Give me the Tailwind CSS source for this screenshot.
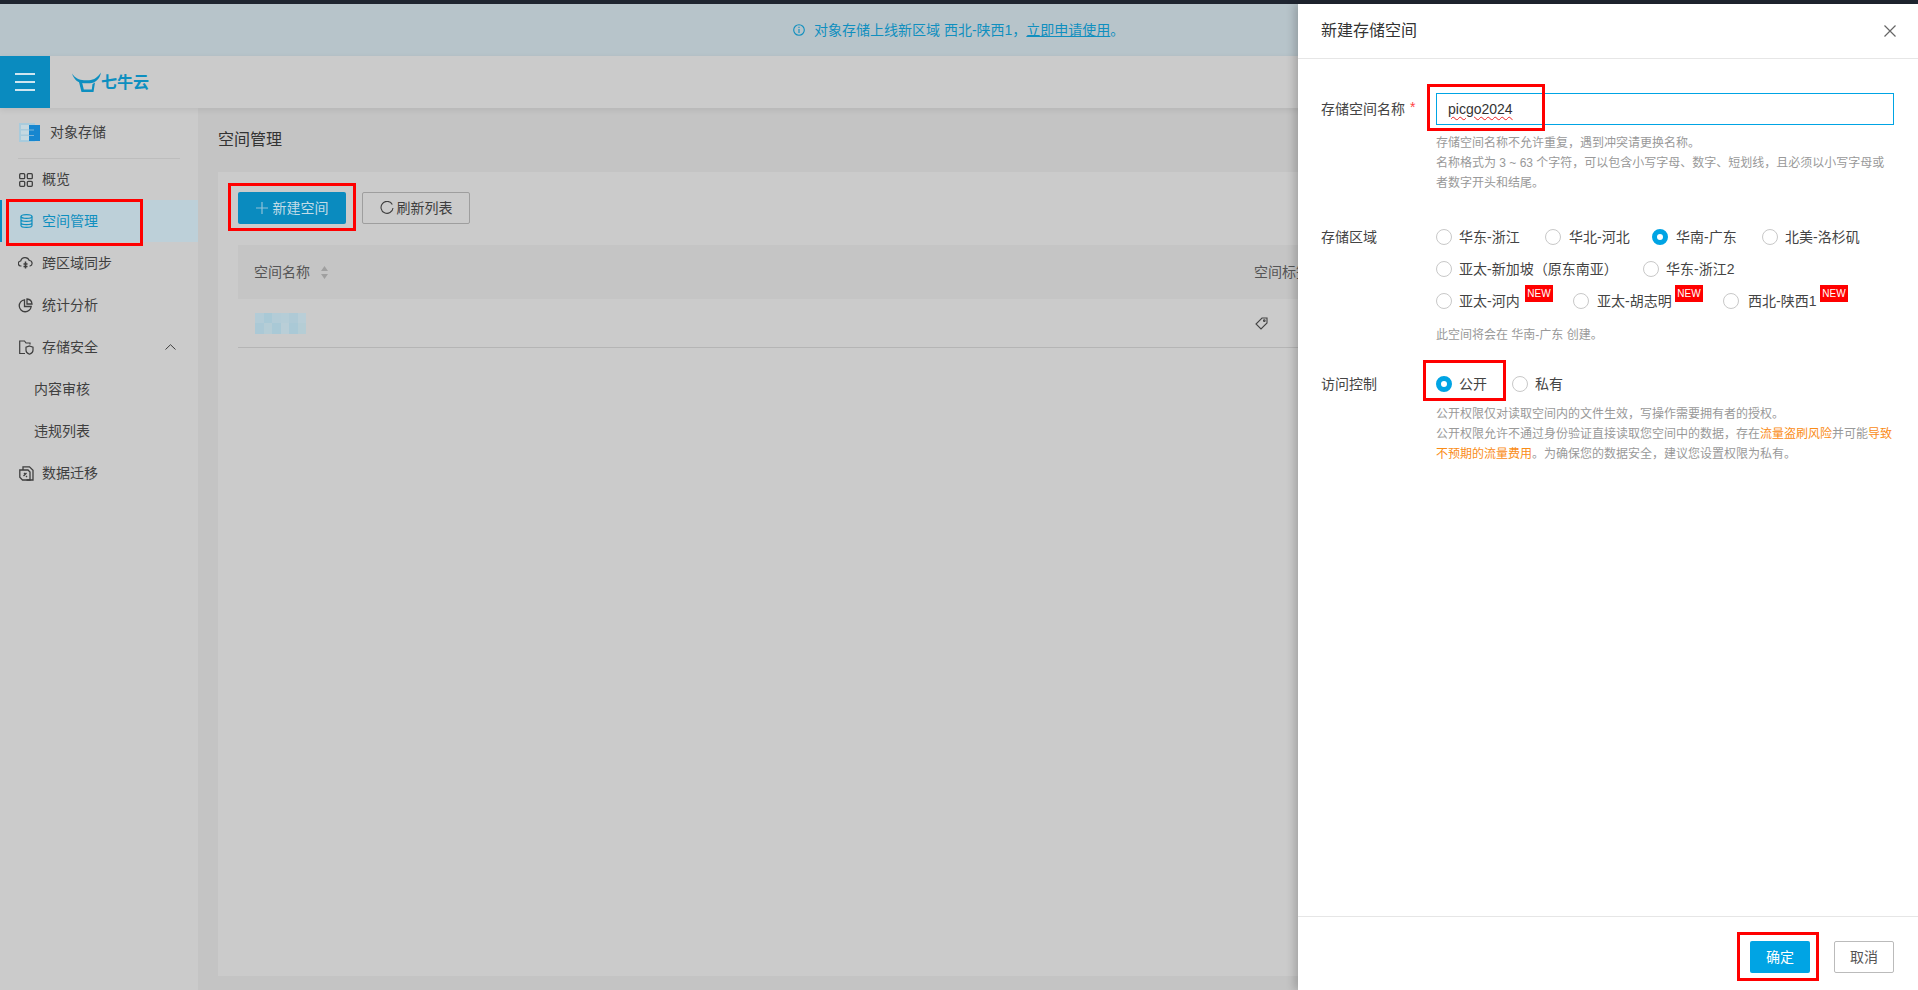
<!doctype html>
<html lang="zh-CN">
<head>
<meta charset="utf-8">
<script src="https://cdn.jsdelivr.net/npm/@tailwindcss/browser@4"></script>
</head>
<body class="m-0 overflow-hidden bg-[#c4c4c4] font-['Liberation_Sans','Noto_Sans_CJK_SC',sans-serif] text-[14px] text-[#3f3f3f]">
<div class="relative flex h-[990px] w-[1918px] flex-col overflow-hidden">
  <div class="h-[4px] shrink-0 bg-[#1f2530]"></div>

  <div class="flex h-[52px] shrink-0 items-center bg-[#b7c4ca] pl-[793px] text-[#0f8fbf]">
    <svg class="mr-[9px] h-[12px] w-[12px]" viewBox="0 0 12 12" fill="none" stroke="currentColor" stroke-width="1.100"><circle cx="6" cy="6" r="5.300"/><path d="M6 5v4M6 2.800v1.100"/></svg>
    <span>对象存储上线新区域 西北-陕西1，<span class="underline">立即申请使用</span>。</span>
  </div>

  <div class="z-10 flex h-[52px] shrink-0 items-center bg-[#cbcbcb] shadow-[0_2px_6px_rgba(0,0,0,0.08)]">
    <div class="flex h-[52px] w-[50px] flex-col items-center justify-center gap-[6px] bg-[#0a8bbf]">
      <span class="h-[2px] w-[20px] bg-[#cfe6f0]"></span>
      <span class="h-[2px] w-[20px] bg-[#cfe6f0]"></span>
      <span class="h-[2px] w-[20px] bg-[#cfe6f0]"></span>
    </div>
    <svg class="ml-[21px] h-[21px] w-[31px]" viewBox="0 0 31 21" fill="#0d8fc0"><path d="M1 1.500C4 6 8 8 13 8.300H18C23 8 27 5 30 .5 29 7 24 11 19 11.300H13C7 11.300 3 7.500 1 1.500Z"/><path d="M8 10h3l1.800 7.500h8L21.500 12l2.500-1.500-1.500 9.500h-12Z"/></svg>
    <span class="mt-[2px] -ml-[1px] text-[16px] leading-none font-bold text-[#0d8fc0]">七牛云</span>
  </div>

  <div class="flex min-h-0 flex-1">
    <aside class="w-[198px] shrink-0 bg-[#cbcbcb] text-[14px]">
      <div class="flex h-[50px] items-center pb-[1px] pl-[19px]">
        <svg class="mr-[10px] h-[21px] w-[21px]" viewBox="0 0 21 21"><rect x="0" y="1" width="16" height="19" fill="#a9cbdc"/><rect x="2" y="3" width="10" height="4" fill="#c6d8e0"/><rect x="2" y="8.500" width="10" height="4" fill="#c6d8e0"/><rect x="2" y="14" width="10" height="4" fill="#c6d8e0"/><rect x="10" y="3" width="11" height="16" fill="#1786cf"/><rect x="10" y="7.500" width="5" height="1" fill="#7db4d8"/><rect x="10" y="13" width="5" height="1" fill="#7db4d8"/></svg>
        <span>对象存储</span>
      </div>
      <div class="mx-[18px] h-px bg-[#bdbdbd]"></div>
      <a class="flex h-[41px] items-center pl-[19px]">
        <svg class="mr-[9px] h-[14px] w-[14px]" viewBox="0 0 14 14" fill="none" stroke="#3f3f3f" stroke-width="1.300"><rect x=".7" y=".7" width="5" height="5" rx="1"/><rect x="8.300" y=".7" width="5" height="5" rx="1"/><rect x=".7" y="8.300" width="5" height="5" rx="1"/><rect x="8.300" y="8.300" width="5" height="5" rx="1"/></svg>
        概览
      </a>
      <a class="flex h-[42px] items-center border-l-[2px] border-[#0a8bbf] bg-[#bdd0d9] pl-[18px] text-[#0f8fbf]">
        <svg class="mr-[9px] h-[14px] w-[13px]" viewBox="0 0 13 14" fill="none" stroke="#0f8fbf" stroke-width="1.200"><ellipse cx="6.500" cy="2.500" rx="5.500" ry="1.900"/><path d="M1 2.500v9c0 1 2.500 1.900 5.500 1.900s5.500-.9 5.500-1.900v-9M1 5.500c0 1 2.500 1.900 5.500 1.900S12 6.500 12 5.500M1 8.700c0 1 2.500 1.900 5.500 1.900S12 9.700 12 8.700"/></svg>
        空间管理
      </a>
      <a class="flex h-[42px] items-center pl-[18px]">
        <svg class="mr-[9px] h-[14px] w-[15px]" viewBox="0 0 15 14" fill="none" stroke="#3f3f3f" stroke-width="1.200"><path d="M3.500 10H3A2.500 2.500 0 0 1 2.700 5 4.500 4.500 0 0 1 11.300 4.500 2.800 2.800 0 0 1 12 10h-.5"/><path d="M7.500 5.500v7M5.500 8h4M5.500 10.500h4" stroke-width="1.500"/></svg>
        跨区域同步
      </a>
      <a class="flex h-[42px] items-center pl-[18px]">
        <svg class="mr-[9px] h-[15px] w-[15px]" viewBox="0 0 15 15" fill="none" stroke="#3f3f3f" stroke-width="1.300"><path d="M6.500 1.800a6 6 0 1 0 6.700 6.700H6.500Z"/><path d="M9 1a5.500 5.500 0 0 1 5 5H9Z"/></svg>
        统计分析
      </a>
      <a class="flex h-[42px] items-center pl-[19px]">
        <svg class="mr-[8px] h-[15px] w-[15px]" viewBox="0 0 15 15" fill="none" stroke="#3f3f3f" stroke-width="1.200"><path d="M6 13.500H.7V1H5.500L7 3h4v1.500"/><path d="M10.500 6l3.500 1.200v3c0 2-1.500 3.300-3.500 4-2-.7-3.500-2-3.500-4v-3Z"/></svg>
        存储安全
        <svg class="mr-[22px] ml-auto h-[6px] w-[11px]" viewBox="0 0 11 6" fill="none" stroke="#3f3f3f" stroke-width="1"><path d="M.5 5.500 5.500.7l5 4.800"/></svg>
      </a>
      <a class="flex h-[42px] items-center pl-[34px]">内容审核</a>
      <a class="flex h-[42px] items-center pl-[34px]">违规列表</a>
      <a class="flex h-[42px] items-center pl-[19px]">
        <svg class="mr-[8px] h-[15px] w-[15px]" viewBox="0 0 15 15" fill="none" stroke="#3f3f3f" stroke-width="1.300"><path d="M4 4V.8h6.500L14 4.300V14H7.500"/><path d="M.8 4H9l2 2v8H3.500L.8 11.300Z"/><path d="m4.500 10 3-3M5 7l1 1M7 10l1 1"/></svg>
        数据迁移
      </a>
    </aside>

    <main class="min-w-0 flex-1 pl-[20px]">
      <h1 class="flex h-[64px] items-center text-[16px] leading-none font-normal text-[#333]">空间管理</h1>
      <section class="h-[804px] w-[1680px] bg-[#cbcbcb] px-[20px] pt-[20px]">
        <div class="flex gap-[16px]">
          <button class="flex h-[32px] w-[108px] items-center justify-center gap-[5px] rounded-[2px] bg-[#0a8bbf] text-[#c2dce7]">
            <svg class="h-[12px] w-[12px]" viewBox="0 0 12 12" stroke="#8fc2d8" stroke-width="1.200"><path d="M6 0v12M0 6h12"/></svg>
            新建空间
          </button>
          <button class="flex h-[32px] w-[108px] items-center justify-center gap-[3px] rounded-[2px] border border-[#9e9e9e] text-[#3f3f3f]">
            <svg class="h-[14px] w-[14px]" viewBox="0 0 14 14" fill="none" stroke="#3f3f3f" stroke-width="1.100"><path d="M12.300 3.500A6 6 0 1 0 13 7"/></svg>
            刷新列表
          </button>
        </div>
        <div class="mt-[21px] flex h-[54px] items-center bg-[#c5c5c5] pl-[16px] text-[#555]">
          <span>空间名称</span>
          <svg class="ml-[10px] h-[13px] w-[9px]" viewBox="0 0 9 13" fill="#a0a0a0"><path d="M4.500 0 8 5H1ZM4.500 13 1 8h7Z"/></svg>
          <span class="ml-[925px] whitespace-nowrap">空间标签</span>
        </div>
        <div class="flex h-[49px] items-center border-b border-[#b5b5b5] pl-[17px]">
          <div class="grid h-[21px] w-[51px] grid-cols-[repeat(6,8.5px)] grid-rows-[repeat(2,10.5px)] bg-[#b3ccd7]">
            <div class="bg-[#b3ccd7]"></div><div class="bg-[#a9c9d6]"></div><div class="bg-[#b3ccd7]"></div><div class="bg-[#b5cdd7]"></div><div class="bg-[#afcad6]"></div><div class="bg-[#b9ced7]"></div>
            <div class="bg-[#abc9d6]"></div><div class="bg-[#b5cdd6]"></div><div class="bg-[#a9c9d6]"></div><div class="bg-[#b9ced7]"></div><div class="bg-[#aac9d6]"></div><div class="bg-[#b5cdd5]"></div>
          </div>
          <svg class="ml-[949px] h-[13px] w-[13px]" viewBox="0 0 13 13" fill="none" stroke="#444" stroke-width="1.100"><path d="M12 1H7L1 7l5 5 6-6Z"/><circle cx="9.300" cy="3.700" r=".8"/></svg>
        </div>
      </section>
    </main>
  </div>

  <!-- drawer -->
  <aside class="absolute top-[4px] right-0 z-20 flex h-[986px] w-[620px] flex-col bg-white shadow-[-4px_0_8px_rgba(0,0,0,0.18)]">
    <header class="flex h-[55px] shrink-0 items-center justify-between border-b border-[#e6e6e6] pr-[22px] pl-[23px]">
      <span class="text-[16px] leading-none text-[#333]">新建存储空间</span>
      <svg class="h-[12px] w-[12px]" viewBox="0 0 12 12" stroke="#666" stroke-width="1.200"><path d="m.5.500 11 11M11.500.500l-11 11"/></svg>
    </header>

    <div class="flex-1 pt-[34px] pr-[24px] pl-[23px] text-[14px] text-[#444]">
      <div class="flex">
        <label class="flex h-[32px] w-[115px] shrink-0 items-center">存储空间名称<span class="ml-[5px] -translate-y-[2px] text-[#f44]">*</span></label>
        <div class="min-w-0 flex-1">
          <div class="flex h-[32px] items-center border border-[#00a4e4] pl-[11px] text-[#333]"><span class="underline decoration-[#e22] decoration-wavy decoration-1 underline-offset-[2px]">picgo2024</span></div>
          <p class="mt-[8px] text-[12px] leading-[20px] text-[#999]">存储空间名称不允许重复，遇到冲突请更换名称。<br>名称格式为 3 ~ 63 个字符，可以包含小写字母、数字、短划线，且必须以小写字母或者数字开头和结尾。</p>
        </div>
      </div>

      <div class="mt-[28px] flex">
        <label class="flex h-[32px] w-[115px] shrink-0 items-center">存储区域</label>
        <div class="min-w-0 flex-1">
          <div class="flex h-[32px] items-center">
            <span class="h-[16px] w-[16px] rounded-full border border-[#c8c8c8]"></span><span class="ml-[7px] w-[86px]">华东-浙江</span>
            <span class="h-[16px] w-[16px] rounded-full border border-[#c8c8c8]"></span><span class="ml-[8px] w-[83px]">华北-河北</span>
            <span class="h-[16px] w-[16px] rounded-full border-[5px] border-[#00a4e4]"></span><span class="ml-[8px] w-[86px]">华南-广东</span>
            <span class="h-[16px] w-[16px] rounded-full border border-[#c8c8c8]"></span><span class="ml-[7px]">北美-洛杉矶</span>
          </div>
          <div class="flex h-[32px] items-center">
            <span class="h-[16px] w-[16px] rounded-full border border-[#c8c8c8]"></span><span class="ml-[7px] w-[184px]">亚太-新加坡（原东南亚）</span>
            <span class="h-[16px] w-[16px] rounded-full border border-[#c8c8c8]"></span><span class="ml-[7px]">华东-浙江2</span>
          </div>
          <div class="flex h-[32px] items-center">
            <span class="h-[16px] w-[16px] rounded-full border border-[#c8c8c8]"></span><span class="ml-[7px] w-[61px] whitespace-nowrap">亚太-河内</span>
            <span class="mb-[15px] ml-[5px] flex h-[17px] w-[28px] items-center justify-center bg-[#f00] text-[10px] leading-none text-white">NEW</span>
            <span class="ml-[20px] h-[16px] w-[16px] rounded-full border border-[#c8c8c8]"></span><span class="ml-[8px] w-[73px] whitespace-nowrap">亚太-胡志明</span>
            <span class="mb-[15px] ml-[5px] flex h-[17px] w-[28px] items-center justify-center bg-[#f00] text-[10px] leading-none text-white">NEW</span>
            <span class="ml-[20px] h-[16px] w-[16px] rounded-full border border-[#c8c8c8]"></span><span class="ml-[9px] w-[67px] whitespace-nowrap">西北-陕西1</span>
            <span class="mb-[15px] ml-[5px] flex h-[17px] w-[28px] items-center justify-center bg-[#f00] text-[10px] leading-none text-white">NEW</span>
          </div>
          <p class="mt-[8px] text-[12px] leading-[20px] text-[#999]">此空间将会在 华南-广东 创建。</p>
        </div>
      </div>

      <div class="mt-[23px] flex">
        <label class="flex h-[32px] w-[115px] shrink-0 items-center">访问控制</label>
        <div class="min-w-0 flex-1">
          <div class="flex h-[32px] items-center">
            <span class="h-[16px] w-[16px] rounded-full border-[5px] border-[#00a4e4]"></span><span class="ml-[7px] w-[53px]">公开</span>
            <span class="h-[16px] w-[16px] rounded-full border border-[#c8c8c8]"></span><span class="ml-[7px]">私有</span>
          </div>
          <div class="mt-[4px] text-[12px] leading-[20px] text-[#999]">
            <p>公开权限仅对读取空间内的文件生效，写操作需要拥有者的授权。</p>
            <p class="whitespace-nowrap">公开权限允许不通过身份验证直接读取您空间中的数据，存在<span class="text-[#fa8c16]">流量盗刷风险</span>并可能<span class="text-[#fa8c16]">导致</span></p>
            <p class="whitespace-nowrap"><span class="text-[#fa8c16]">不预期的流量费用</span>。为确保您的数据安全，建议您设置权限为私有。</p>
          </div>
        </div>
      </div>
    </div>

    <footer class="flex h-[74px] shrink-0 items-start gap-[24px] border-t border-[#e6e6e6] pt-[24px] pl-[452px]">
      <button class="flex h-[32px] w-[60px] items-center justify-center rounded-[2px] bg-[#00a4e4] text-white">确定</button>
      <button class="flex h-[32px] w-[60px] items-center justify-center rounded-[2px] border border-[#bbb] text-[#555]">取消</button>
    </footer>
  </aside>

  <!-- red annotation boxes -->
  <div class="absolute top-[199px] left-[6px] z-30 h-[47px] w-[137px] border-[3px] border-[#f00]"></div>
  <div class="absolute top-[183px] left-[228px] z-30 h-[48px] w-[128px] border-[3px] border-[#f00]"></div>
  <div class="absolute top-[84px] left-[1427px] z-30 h-[47px] w-[118px] border-[3px] border-[#f00]"></div>
  <div class="absolute top-[360px] left-[1423px] z-30 h-[41px] w-[83px] border-[3px] border-[#f00]"></div>
  <div class="absolute top-[932px] left-[1737px] z-30 h-[49px] w-[82px] border-[3px] border-[#f00]"></div>
</div>
</body>
</html>
